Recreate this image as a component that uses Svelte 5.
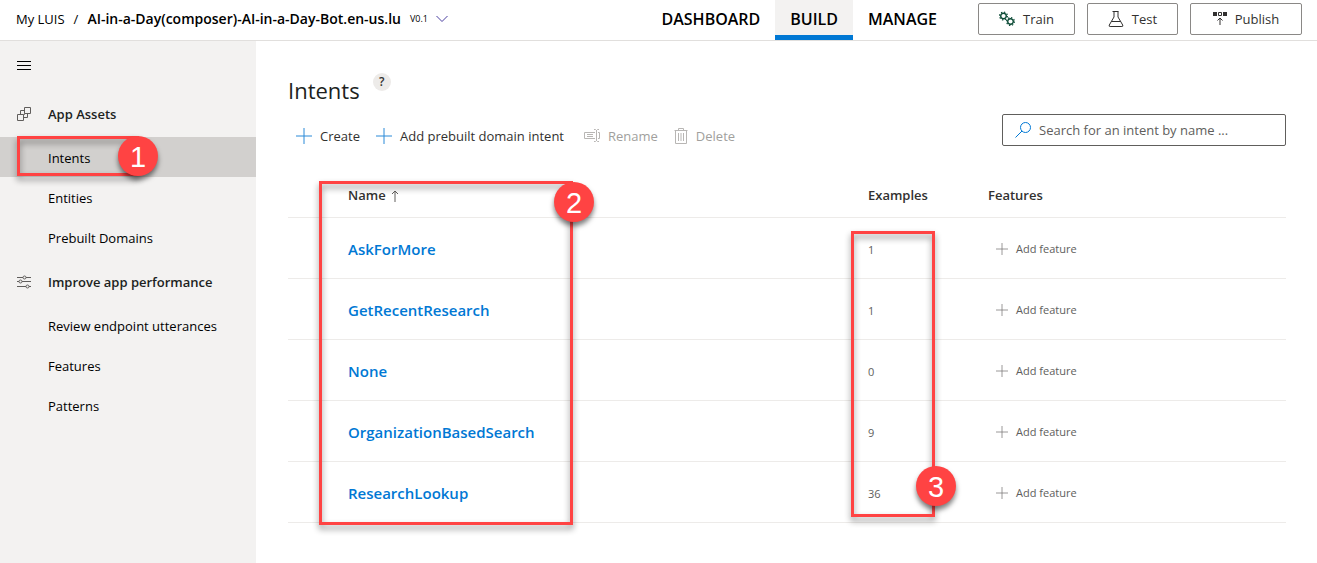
<script>
  const assets = ['Intents', 'Entities', 'Prebuilt Domains'];
  const improve = ['Review endpoint utterances', 'Features', 'Patterns'];
  const intents = [
    { name: 'AskForMore', examples: 1 },
    { name: 'GetRecentResearch', examples: 1 },
    { name: 'None', examples: 0 },
    { name: 'OrganizationBasedSearch', examples: 9 },
    { name: 'ResearchLookup', examples: 36 }
  ];
  let current = $state('Intents');
  let query = $state('');
  const shown = $derived(intents.filter((i) => i.name.toLowerCase().includes(query.toLowerCase())));
</script>

{#snippet plus(size)}
  <svg width={size} height={size} viewBox="0 0 16 16" aria-hidden="true"><path d="M8 0v16M0 8h16" /></svg>
{/snippet}

{#snippet gear(x, y)}
  <g transform="translate({x} {y})">
    <circle r="2.8" stroke-width="1.4" />
    <circle r="3.9" stroke-width="1.2" stroke-dasharray="1.4 1.663" />
  </g>
{/snippet}

{#snippet navItems(items)}
  <ul>
    {#each items as item}
      <li>
        <a href="#{item}" class:current={current === item} onclick={() => (current = item)}>{item}</a>
      </li>
    {/each}
  </ul>
{/snippet}

<div class="app">
  <header>
    <div class="crumbs">
      <a href="#apps">My LUIS</a>
      <span>/</span>
      <a href="#app" class="app-name">AI-in-a-Day(composer)-AI-in-a-Day-Bot.en-us.lu</a>
      <button class="version">
        V0.1
        <svg width="12" height="8" viewBox="0 0 12 8" aria-hidden="true"><path d="M.5 1 6 6.5 11.500 1" /></svg>
      </button>
    </div>
    <nav class="tabs" aria-label="Main">
      <a href="#dashboard">DASHBOARD</a>
      <a href="#build" class="active">BUILD</a>
      <a href="#manage">MANAGE</a>
    </nav>
    <div class="actions">
      <button class="train">
        <svg class="gears" width="16" height="16" viewBox="0 0 16 16" aria-hidden="true">
          {@render gear(4.500, 5)}
          {@render gear(11.500, 10.500)}
        </svg>
        Train
      </button>
      <button class="test">
        <svg width="16" height="16" viewBox="0 0 16 16" aria-hidden="true">
          <path d="M4.500.5h6M6 .5v5.500L1.300 14q-.7 1.500.8 1.500h11.800q1.500 0 .8-1.500L10 6V.5M3.500 10.500h9" />
        </svg>
        Test
      </button>
      <button class="publish">
        <svg width="14" height="16" viewBox="0 0 14 16" aria-hidden="true">
          <path class="solid" d="M0 1h4v4H0zM10 1h4v4h-4z" />
          <path d="M5.500 1.500h3v3h-3zM7 14V7.500M4.500 9.500 7 7l2.500 2.500" />
        </svg>
        Publish
      </button>
    </div>
  </header>

  <div class="body">
    <aside>
      <button class="menu" aria-label="Toggle navigation">
        <svg width="16" height="16" viewBox="0 0 16 16" aria-hidden="true"><path d="M1 4.500h14M1 8.500h14M1 12.500h14" /></svg>
      </button>
      <h2>
        <svg width="16" height="16" viewBox="0 0 16 16" aria-hidden="true">
          <path d="M1.500 8.500h6v6h-6zM8.500 1.500h6v6h-6zM4.500 8V4.500h4M7.500 11.500h4V8M7.500 8.500h1V7.500" />
        </svg>
        App Assets
      </h2>
      {@render navItems(assets)}
      <h2>
        <svg width="16" height="16" viewBox="0 0 16 16" aria-hidden="true">
          <path d="M1 3.500h6M10 3.500h5M1 7.500h2M6 7.500h9M1 12.500h9M13 12.500h2" />
          <circle cx="8.500" cy="3.500" r="1.500" /><circle cx="4.500" cy="7.500" r="1.500" /><circle cx="11.500" cy="12.500" r="1.500" />
        </svg>
        Improve app performance
      </h2>
      {@render navItems(improve)}
    </aside>

    <main>
      <div class="title">
        <h1>Intents</h1>
        <button class="help" aria-label="Help">?</button>
      </div>
      <div class="toolbar">
        <button class="create">{@render plus(16)}Create</button>
        <button class="prebuilt">{@render plus(16)}Add prebuilt domain intent</button>
        <button class="rename" disabled>
          <svg width="16" height="16" viewBox="0 0 16 16" aria-hidden="true">
            <path d="M11 4.500H.5v6H11M3 6.500h6M3 8.500h6M14 4.500h1.500v6H14M12.500 2v11M10 1.500h1.500l1 1 1-1H15M10 13.500h1.500l1-1 1 1H15" />
          </svg>
          Rename
        </button>
        <button disabled>
          <svg width="14" height="16" viewBox="0 0 14 16" aria-hidden="true">
            <path d="M.5 2.500h13M4.500 2.500v-2h5v2M1.500 2.500v13h11v-13M4.500 5v8M7 5v8M9.500 5v8" />
          </svg>
          Delete
        </button>
        <label class="search">
          <svg width="16" height="16" viewBox="0 0 16 16" aria-hidden="true">
            <circle cx="10.500" cy="5.500" r="5" /><path d="M7 9 .5 15.500" />
          </svg>
          <input type="text" bind:value={query} placeholder="Search for an intent by name ..." aria-label="Search for an intent by name" />
        </label>
      </div>

      <table>
        <colgroup><col class="col-name" /><col class="col-examples" /><col /></colgroup>
        <thead>
          <tr>
            <th scope="col">
              Name
              <svg width="8" height="12" viewBox="0 0 8 12" aria-hidden="true"><path d="M4 12V1M1 4l3-3 3 3" /></svg>
            </th>
            <th scope="col">Examples</th>
            <th scope="col">Features</th>
          </tr>
        </thead>
        <tbody>
          {#each shown as intent (intent.name)}
            <tr>
              <td><a href="#{intent.name}">{intent.name}</a></td>
              <td>{intent.examples}</td>
              <td><button class="feature">{@render plus(12)}Add feature</button></td>
            </tr>
          {/each}
        </tbody>
      </table>
    </main>
  </div>

  <div class="frame frame-1"></div>
  <div class="frame frame-2"></div>
  <div class="frame frame-3"></div>
  <span class="badge badge-1">1</span>
  <span class="badge badge-2">2</span>
  <span class="badge badge-3">3</span>
</div>

<style>
  :global(body) {
    margin: 0;
    background: #fff;
  }
  .app {
    position: relative;
    display: flex;
    flex-direction: column;
    min-height: 100vh;
    font: 13px/20px 'Open Sans', 'Noto Sans', sans-serif;
    color: #323130;
  }
  .app :global(*) {
    box-sizing: border-box;
  }
  a {
    color: inherit;
    text-decoration: none;
  }
  button {
    display: inline-flex;
    align-items: center;
    padding: 0;
    border: 0;
    background: none;
    font: inherit;
    color: inherit;
    white-space: nowrap;
  }
  svg {
    flex: none;
    fill: none;
    stroke: currentColor;
  }
  header {
    display: flex;
    height: 41px;
    padding-right: 15px;
    border-bottom: 1px solid #e1dfdd;
    color: #000;
  }
  .crumbs {
    display: flex;
    align-items: center;
    gap: 9px;
    padding: 0 0 2px 16px;
    white-space: nowrap;
  }
  .app-name {
    font-size: 14px;
    font-weight: 600;
  }
  .version {
    gap: 8px;
    font-size: 9px;
  }
  .version svg {
    stroke: #4b3fa0;
  }
  .tabs {
    display: flex;
    margin-left: auto;
    font-size: 16px;
    font-weight: 600;
  }
  .tabs a {
    display: flex;
    align-items: center;
    padding: 0 15px 2px;
  }
  .tabs .active {
    background: #f3f2f1;
    box-shadow: inset 0 -5px #0078d4;
  }
  .actions {
    display: flex;
    gap: 12px;
    padding: 3px 0 5px;
    margin-left: 26px;
    color: #323130;
  }
  .actions button {
    justify-content: center;
    gap: 8px;
    border: 1px solid #8a8886;
    border-radius: 2px;
  }
  .train {
    width: 97px;
  }
  .test {
    width: 91px;
  }
  .publish {
    width: 112px;
  }
  .gears {
    stroke: #0b4a35;
    overflow: visible;
  }
  .solid {
    fill: currentColor;
    stroke: none;
  }
  .body {
    display: flex;
    flex: 1;
  }
  aside {
    flex: none;
    width: 256px;
    background: #f3f2f1;
    color: #201f1e;
  }
  .menu {
    height: 48px;
    padding: 0 16px;
    color: #000;
  }
  h2 {
    display: flex;
    align-items: center;
    gap: 16px;
    height: 48px;
    margin: 0;
    padding: 2px 16px 0;
    font-size: 13px;
    font-weight: 600;
  }
  h2 svg {
    stroke: #605e5c;
  }
  ul {
    margin: 0;
    padding: 0;
    list-style: none;
  }
  li a {
    display: flex;
    align-items: center;
    height: 40px;
    padding: 2px 16px 0 48px;
    color: #000;
  }
  li .current {
    background: #d2d0ce;
  }
  main {
    flex: 1;
    min-width: 0;
    padding: 32px 31px 32px 32px;
  }
  .title {
    display: flex;
    align-items: flex-start;
    gap: 13px;
    height: 41px;
  }
  h1 {
    margin: 0;
    font-size: 22px;
    line-height: 34px;
    font-weight: 400;
    color: #201f1e;
  }
  .help {
    justify-content: center;
    width: 18px;
    height: 18px;
    border-radius: 50%;
    background: #edebe9;
    font-size: 12px;
    font-weight: 600;
  }
  .toolbar {
    display: flex;
    align-items: flex-start;
    padding-left: 8px;
  }
  .toolbar button {
    gap: 8px;
    height: 44px;
  }
  .toolbar button:disabled {
    color: #a19f9d;
  }
  .toolbar button:disabled svg {
    stroke: #b8b6b4;
  }
  .toolbar .create svg,
  .toolbar .prebuilt svg {
    stroke: #2b8ad8;
  }
  .create,
  .prebuilt,
  .rename {
    margin-right: 16px;
  }
  .prebuilt {
    min-width: 192px;
  }
  .search {
    display: flex;
    align-items: center;
    gap: 8px;
    width: 284px;
    height: 32px;
    margin-left: auto;
    padding: 0 12px;
    border: 1px solid #605e5c;
    border-radius: 2px;
  }
  .search svg {
    stroke: #0078d4;
  }
  input {
    flex: 1;
    min-width: 0;
    padding: 0;
    border: 0;
    outline: 0;
    background: none;
    font: inherit;
    color: #323130;
  }
  input::placeholder {
    color: #605e5c;
    opacity: 1;
  }
  table {
    width: 100%;
    margin-top: 14px;
    border-collapse: separate;
    border-spacing: 0;
    table-layout: fixed;
  }
  .col-name {
    width: 580px;
  }
  .col-examples {
    width: 120px;
  }
  th,
  td {
    padding: 0;
    border-bottom: 1px solid #edebe9;
    text-align: left;
  }
  th {
    height: 46px;
    font-weight: 600;
  }
  th svg {
    margin-left: 2px;
    vertical-align: -2px;
    stroke: #605e5c;
  }
  td {
    height: 61px;
    padding-top: 3px;
    font-size: 11px;
    color: #605e5c;
  }
  th:first-child,
  td:first-child {
    padding-left: 60px;
  }
  td a {
    font-size: 15px;
    font-weight: 600;
    color: #0078d4;
  }
  .feature {
    gap: 8px;
    padding-left: 8px;
  }
  .feature svg {
    stroke: #797775;
  }
  .frame {
    position: absolute;
    border: 3px solid #ff4343;
    filter: drop-shadow(0 4px 3px rgba(0, 0, 0, 0.45));
    pointer-events: none;
  }
  .frame-1 {
    left: 17px;
    top: 136px;
    width: 122px;
    height: 40px;
  }
  .frame-2 {
    left: 319px;
    top: 181px;
    width: 254px;
    height: 344px;
  }
  .frame-3 {
    left: 851px;
    top: 231px;
    width: 84px;
    height: 286px;
  }
  .badge {
    position: absolute;
    width: 40px;
    height: 40px;
    border-radius: 50%;
    background: #ff4343;
    box-shadow: 0 4px 5px rgba(0, 0, 0, 0.5);
    font: 29px/42px 'Liberation Sans', Arial, sans-serif;
    color: #fff;
    text-align: center;
    pointer-events: none;
  }
  .badge-1 {
    left: 118px;
    top: 136px;
  }
  .badge-2 {
    left: 554px;
    top: 182px;
  }
  .badge-3 {
    left: 916px;
    top: 466px;
  }
</style>
